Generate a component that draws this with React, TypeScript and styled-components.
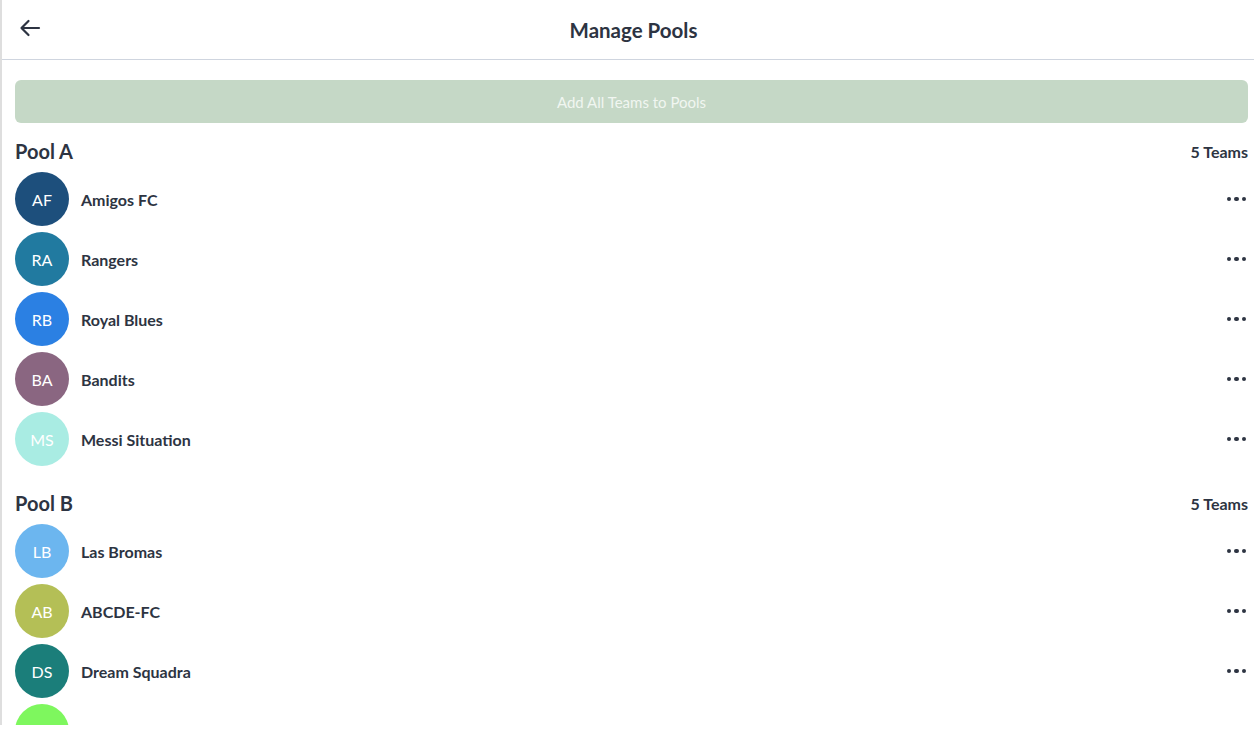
import styled, { createGlobalStyle } from "styled-components";

const GlobalStyle = createGlobalStyle`
  html, body {
    margin: 0;
    padding: 0;
    background: #ffffff;
  }
  * {
    box-sizing: border-box;
  }
`;

type Team = { initials: string; name: string; color: string };

const pools: { title: string; teams: Team[] }[] = [
  {
    title: "Pool A",
    teams: [
      { initials: "AF", name: "Amigos FC", color: "#1d4f7c" },
      { initials: "RA", name: "Rangers", color: "#217aa0" },
      { initials: "RB", name: "Royal Blues", color: "#2b80e3" },
      { initials: "BA", name: "Bandits", color: "#8a6681" },
      { initials: "MS", name: "Messi Situation", color: "#a9ece3" },
    ],
  },
  {
    title: "Pool B",
    teams: [
      { initials: "LB", name: "Las Bromas", color: "#6cb6ef" },
      { initials: "AB", name: "ABCDE-FC", color: "#b4bf56" },
      { initials: "DS", name: "Dream Squadra", color: "#1b7e7a" },
      { initials: "TL", name: "Team Lightning Bolts", color: "#7ef75e" },
      { initials: "GS", name: "Golden Stars", color: "#e0a03a" },
    ],
  },
];

const App = () => {
  return (
    <>
      <GlobalStyle />
      <Page>
        <Header>
          <BackButton aria-label="Back">
            <svg width="22" height="18" viewBox="0 0 22 18" fill="none">
              <path
                d="M20 9H3M9.5 2L2.5 9l7 7"
                stroke="#2d3442"
                strokeWidth="2.2"
                strokeLinecap="round"
                strokeLinejoin="round"
              />
            </svg>
          </BackButton>
          <Title>Manage Pools</Title>
        </Header>
        <Content>
          <AddButton>Add All Teams to Pools</AddButton>
          {pools.map((pool) => (
            <Section key={pool.title}>
              <PoolHeader>
                <PoolTitle>{pool.title}</PoolTitle>
                <TeamCount>{pool.teams.length} Teams</TeamCount>
              </PoolHeader>
              <TeamList>
                {pool.teams.map((team) => (
                  <TeamRow key={team.initials}>
                    <Avatar $color={team.color}>{team.initials}</Avatar>
                    <TeamName>{team.name}</TeamName>
                    <MoreButton aria-label="More">
                      <Dot />
                      <Dot />
                      <Dot />
                    </MoreButton>
                  </TeamRow>
                ))}
              </TeamList>
            </Section>
          ))}
        </Content>
      </Page>
    </>
  );
};

const Page = styled.div`
  width: 1254px;
  height: 725px;
  overflow: hidden;
  border-left: 2px solid #dedede;
  font-family: Lato, "Open Sans", sans-serif;
  color: #2d3442;
  background: #ffffff;
`;

const Header = styled.div`
  position: relative;
  display: flex;
  align-items: center;
  justify-content: center;
  height: 60px;
  padding: 0 6px 0 13px;
  border-bottom: 1px solid #cfd5df;
`;

const BackButton = styled.button`
  position: absolute;
  left: 17px;
  top: 19px;
  display: flex;
  padding: 0;
  border: none;
  background: none;
  cursor: pointer;
`;

const Title = styled.h1`
  margin: 0 0 0 4px;
  font-size: 20.5px;
  font-weight: 700;
  color: #2d3442;
`;

const Content = styled.div`
  padding: 20px 6px 0 13px;
`;

const AddButton = styled.button`
  display: block;
  width: 100%;
  height: 43px;
  border: none;
  border-radius: 6px;
  background: #c5d8c6;
  color: #f1f6f1;
  font-family: Lato, "Open Sans", sans-serif;
  font-size: 15px;
  font-weight: 400;
  cursor: pointer;
`;

const Section = styled.section`
  padding: 16px 0 9px;
`;

const PoolHeader = styled.div`
  display: flex;
  align-items: center;
  justify-content: space-between;
  height: 24px;
  margin-bottom: 9px;
`;

const PoolTitle = styled.h2`
  margin: 0;
  font-size: 20px;
  font-weight: 700;
  color: #2d3442;
`;

const TeamCount = styled.span`
  font-size: 16px;
  font-weight: 700;
  color: #2d3442;
`;

const TeamList = styled.div`
  display: flex;
  flex-direction: column;
  gap: 6px;
`;

const TeamRow = styled.div`
  display: flex;
  align-items: center;
  height: 54px;
`;

const Avatar = styled.div<{ $color: string }>`
  display: flex;
  align-items: center;
  justify-content: center;
  flex-shrink: 0;
  width: 54px;
  height: 54px;
  border-radius: 50%;
  background: ${(p) => p.$color};
  color: #ffffff;
  font-size: 16px;
  font-weight: 400;
`;

const TeamName = styled.span`
  flex: 1;
  margin-left: 12px;
  font-size: 16px;
  font-weight: 700;
  color: #2d3442;
`;

const MoreButton = styled.button`
  display: flex;
  align-items: center;
  gap: 3px;
  margin-right: 2px;
  padding: 4px 0;
  border: none;
  background: none;
  cursor: pointer;
`;

const Dot = styled.span`
  width: 4.5px;
  height: 4.5px;
  border-radius: 50%;
  background: #2d3442;
`;

export default App;
